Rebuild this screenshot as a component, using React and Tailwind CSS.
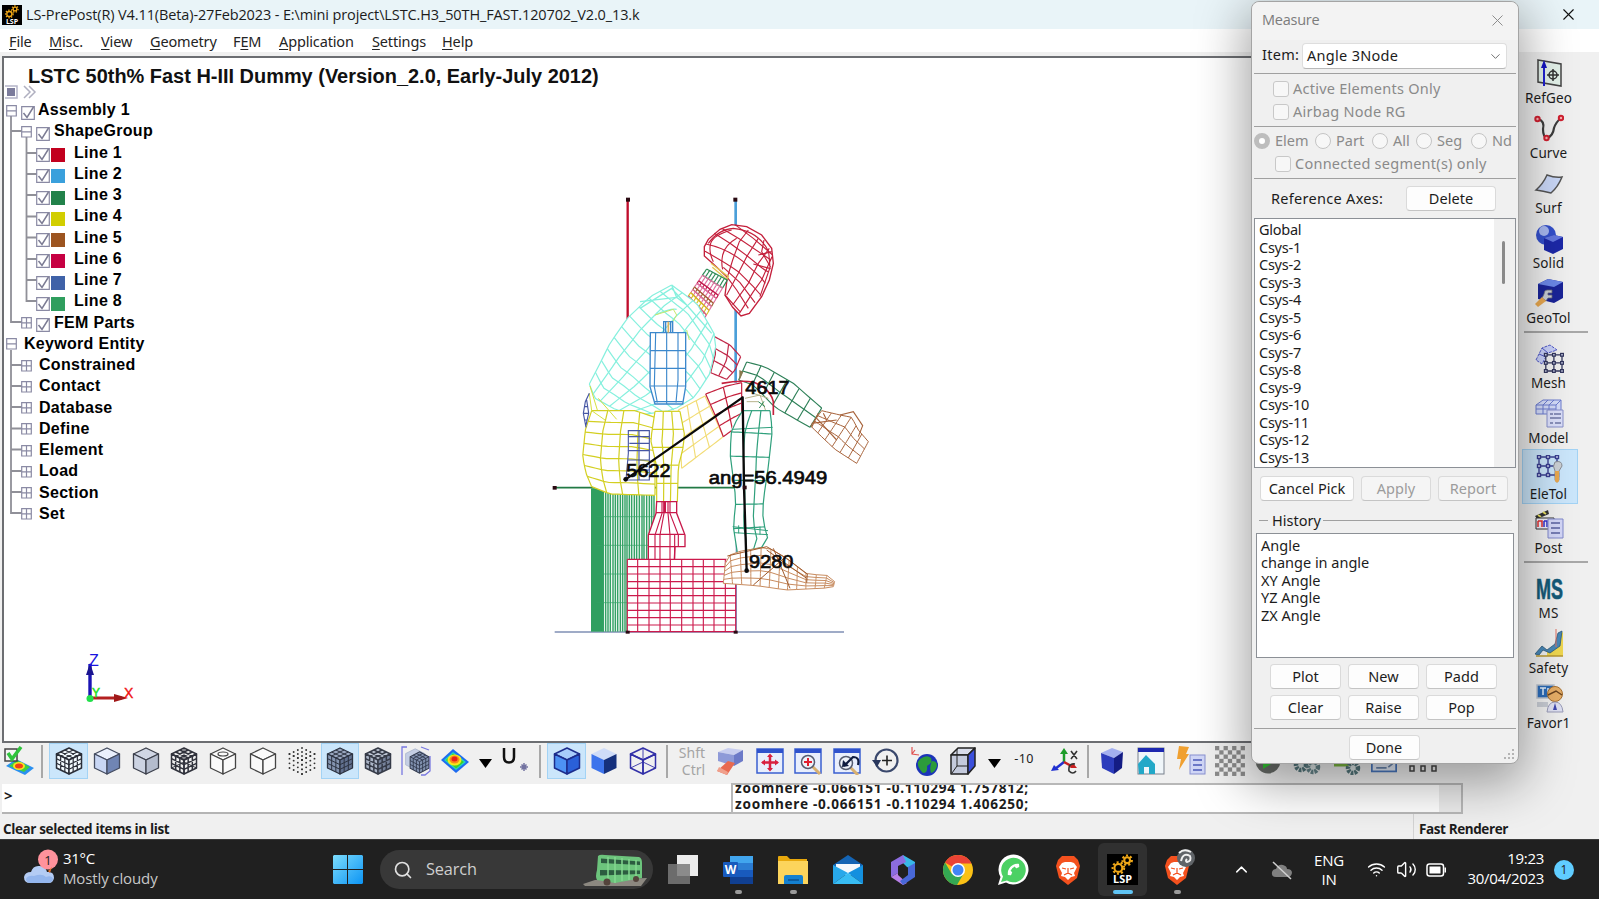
import React from "react";
import { ChevronDown, ChevronUp, Search, Volume2, Wifi, X } from "lucide-react";
import { FaPhoneAlt } from "react-icons/fa";

/* ---------- geometry helpers for the wireframe ---------- */
const at = (pts, t) => {
  const seg = [];
  let total = 0;
  for (let i = 1; i < pts.length; i++) {
    const d = Math.hypot(pts[i][0] - pts[i - 1][0], pts[i][1] - pts[i - 1][1]);
    seg.push(d);
    total += d;
  }
  let left = t * total;
  for (let i = 0; i < seg.length; i++) {
    if (left <= seg[i] || i === seg.length - 1) {
      const k = seg[i] ? Math.min(1, left / seg[i]) : 0;
      return [pts[i][0] + (pts[i + 1][0] - pts[i][0]) * k, pts[i][1] + (pts[i + 1][1] - pts[i][1]) * k];
    }
    left -= seg[i];
  }
  return pts[0];
};

const str = (pts) => pts.map((p) => `${p[0].toFixed(1)},${p[1].toFixed(1)}`).join(" ");

/* Coons patch bounded by four polylines, drawn as an nu x nv wire mesh. */
function Patch({ t, b, l, r, nu, nv, color, sw = 3, fill = "none" }) {
  const c00 = t[0], c10 = t[t.length - 1], c01 = b[0], c11 = b[b.length - 1];
  const p = (u, v) => {
    const T = at(t, u), B = at(b, u), L = at(l, v), R = at(r, v);
    return [0, 1].map(
      (k) =>
        (1 - v) * T[k] + v * B[k] + (1 - u) * L[k] + u * R[k] -
        ((1 - u) * (1 - v) * c00[k] + u * (1 - v) * c10[k] + (1 - u) * v * c01[k] + u * v * c11[k])
    );
  };
  const lines = [];
  const N = 12;
  for (let j = 0; j <= nv; j++) lines.push(Array.from({ length: N + 1 }, (_, i) => p(i / N, j / nv)));
  for (let i = 0; i <= nu; i++) lines.push(Array.from({ length: N + 1 }, (_, j) => p(i / nu, j / N)));
  return (
    <g fill="none" stroke={color} strokeWidth={sw}>
      {fill !== "none" && <polygon points={str([...t, ...r, ...[...b].reverse(), ...[...l].reverse()])} fill={fill} stroke="none" />}
      {lines.map((q, i) => <polyline key={i} points={str(q)} />)}
    </g>
  );
}

const NECK = [
  [0, 0.2, "#2e8b57"], [0.2, 0.38, "#e070a0"], [0.38, 0.46, "#c0184a"], [0.46, 0.58, "#e070a0"],
  [0.58, 0.66, "#a06030"], [0.66, 0.76, "#e070a0"], [0.76, 0.87, "#d4c01c"], [0.87, 1, "#d85a90"],
];
const neckL = (k) => [500 - 63 * k, 267 + 93 * k];
const neckR = (k) => [562 - 72 * k, 300 + 120 * k];

function Label({ x, y, w, children }) {
  return (
    <text x={x} y={y} textLength={w} lengthAdjust="spacingAndGlyphs" fontSize="56" fill="#0a0a0a" stroke="#0a0a0a" strokeWidth="2" fontFamily="Liberation Sans, sans-serif">
      {children}
    </text>
  );
}

function Dummy() {
  const stripes = [190, 197, 204, 211, 219, 226, 233, 241, 248, 255, 261];
  const upper = [268, 275, 283, 290, 298, 306, 312, 320, 328, 335, 342];
  return (
    <svg className="absolute left-[536px] top-[122px]" width="350" height="470" viewBox="0 0 1050 1410">
      {/* reference lines */}
      <path d="M44 1356H912" stroke="#7f8fb5" strokeWidth="4" />
      <path d="M589 1080V1355" stroke="#7d98c8" strokeWidth="4" />
      <path d="M263 58V420" stroke="#c00d2c" strokeWidth="7" />
      <path d="M587 58V608" stroke="#4b9fd9" strokeWidth="8" />
      <path d="M44 923H617" stroke="#227a45" strokeWidth="5" />
      {/* seat */}
      <rect x="153" y="925" width="38" height="430" fill="#2f9f60" />
      <g stroke="#35a266" strokeWidth="4.400">
        {stripes.map((x) => <path key={x} d={`M${x} 925V1355`} />)}
        {upper.map((x) => <path key={x} d={`M${x} 930V1138`} />)}
        <path d="M170 1010H345M170 1096H325M170 1182H262M170 1268H262" strokeWidth="2" />
      </g>
      {/* foot block */}
      <rect x="262" y="1138" width="325" height="217" fill="#fff" />
      <g stroke="#cc1a4c" strokeWidth="3.4" fill="none">
        {[262, 293, 327, 360, 391, 425, 459, 490, 522, 556, 587].map((x) => <path key={x} d={`M${x} 1138V1355`} />)}
        {[1138, 1160, 1182, 1205, 1225, 1247, 1269, 1291, 1313, 1335, 1355].map((y) => <path key={y} d={`M262 ${y}H587`} />)}
      </g>
      {/* head */}
      <path d="M493 228L493 200L505 178L540 148L575 134L620 140L665 165L695 205L700 250L688 300L665 350L628 400L603 408L578 382L555 345L562 292L520 252Z" fill="#fff" stroke="#c4203c" strokeWidth="4" />
      <g fill="none" stroke="#c4203c" strokeWidth="3.400">
        <path d="M523 160Q590 200 655 255Q670 268 684 275M498 192Q560 205 610 245L662 292L676 310M545 145L600 178L693 240M585 134L640 175L698 225M495 214Q560 250 595 275L640 320L662 345M550 262L600 308L645 368M562 292L590 330L625 385M555 345L600 395" />
        <path d="M575 150Q520 165 512 190Q505 215 520 245M590 175Q555 195 548 225Q543 250 548 268M625 150L598 185L578 240L562 292M655 175L620 230L595 280L560 345M688 205L655 250L625 310L578 375M696 230L665 300L640 335L598 400" />
        <path d="M505 190Q535 148 580 145Q655 152 686 215L690 262L660 350M672 180L665 215L692 262M655 225L695 215M640 252L692 266" />
      </g>
      <path d="M513 250L565 290L560 298L517 262" fill="none" stroke="#e0c850" strokeWidth="4" />
      {/* neck */}
      {NECK.map(([a, b, c]) => (
        <Patch key={a} color={c} nu={7} nv={1} sw={3.6} t={[neckL(a), neckR(a)]} b={[neckL(b), neckR(b)]} l={[neckL(a), neckL(b)]} r={[neckR(a), neckR(b)]} />
      ))}
      {/* far upper arm */}
      <Patch color="#c02848" sw={3.6} nu={2} nv={3} t={[[520, 468], [570, 495], [602, 530]]} r={[[602, 530], [585, 570], [560, 598]]} l={[[520, 468], [527, 520], [512, 578]]} b={[[512, 578], [560, 598]]} />
      {/* torso */}
      <Patch color="#86f0de" sw={3.6} fill="#fff" nu={10} nv={6}
        t={[[148, 612], [175, 560], [210, 490], [262, 415], [330, 350], [395, 315]]}
        r={[[395, 315], [470, 370], [522, 460], [527, 500]]}
        l={[[148, 612], [165, 655], [230, 690], [300, 705]]}
        b={[[300, 705], [400, 690], [465, 650], [510, 580], [527, 500]]} />
      <path d="M300 385L395 325L440 375L515 460M345 405Q390 385 410 388M300 365L410 352M395 315L410 352L440 375" fill="none" stroke="#86f0de" strokeWidth="4" />
      <path d="M345 405L400 388L410 405L398 425M440 450L448 480" fill="none" stroke="#c8e86a" strokeWidth="3" />
      {/* near arm */}
      <path d="M331 458H437V620L428 672H345L330 620Z" fill="#fff" stroke="#3c88cc" strokeWidth="4" />
      <path d="M347 458L343 620L352 668M380 458V672M414 458V600L408 668M331 512H437M330 565H437M331 618H435M345 665H428" fill="none" stroke="#3c88cc" strokeWidth="3.400" />
      <path d="M371 458V425H398V458M377 425V458M392 425V458" fill="none" stroke="#3c88cc" strokeWidth="4" />
      <path d="M385 425V458" stroke="#e0b060" strokeWidth="5" />
      {/* green forearm and hand */}
      <Patch color="#2e8058" sw={3.4} nu={6} nv={2}
        t={[[620, 546], [675, 560], [760, 610], [845, 684]]}
        r={[[845, 684], [810, 742]]}
        l={[[620, 546], [596, 600]]}
        b={[[596, 600], [640, 615], [705, 682], [810, 742]]} />
      <path d="M598 570L610 575L598 602Z" fill="#8a7a50" />
      <Patch color="#a8643c" nu={6} nv={3}
        t={[[845, 692], [900, 705], [935, 712], [955, 750], [985, 785]]}
        r={[[985, 785], [950, 850]]}
        l={[[845, 692], [812, 738]]}
        b={[[812, 738], [850, 775], [885, 808], [950, 850]]} />
      <path d="M900 705L940 695L968 737L955 770M815 730L890 720M830 715L890 780M835 700L815 742M850 700L860 720" fill="none" stroke="#a8643c" strokeWidth="3.400" />
      {/* far thigh and knee */}
      <Patch color="#f2dc74" fill="#fff" nu={3} nv={4} sw={3.4} t={[[415, 690], [495, 648]]} r={[[495, 648], [550, 770]]} l={[[415, 690], [425, 865]]} b={[[425, 865], [550, 770]]} />
      <Patch color="#c4203c" fill="#fff" nu={2} nv={4} sw={3.6} t={[[497, 642], [560, 618], [605, 608]]} r={[[605, 608], [605, 730]]} l={[[497, 642], [525, 705], [550, 770]]} b={[[550, 770], [605, 730]]} />
      <path d="M545 610Q600 600 640 606Q690 625 700 665V705" fill="none" stroke="#c4203c" strokeWidth="5" />
      <path d="M615 655L660 645L680 700M640 640L685 655M620 665H655" fill="none" stroke="#b8b48c" strokeWidth="3" />
      <path d="M655 665L675 680M672 664L658 684" stroke="#2e8b57" strokeWidth="3" />
      {/* shin */}
      <Patch color="#2fa07c" fill="#fff" nu={3} nv={6} sw={3.6}
        t={[[608, 692], [690, 692]]}
        r={[[690, 692], [697, 750], [685, 860], [670, 960], [668, 1030], [685, 1060], [680, 1085], [665, 1102]]}
        l={[[608, 692], [575, 745], [570, 820], [588, 960], [580, 1040], [592, 1118]]}
        b={[[592, 1118], [665, 1102]]} />
      <path d="M578 1040L684 1052M582 1058L684 1064M576 748L698 742M596 1036V1060M660 1040V1064" stroke="#2fa07c" strokeWidth="3" />
      {/* shoe */}
      <Patch color="#c88c60" fill="#fff" nu={12} nv={5}
        t={[[556, 1150], [562, 1128], [600, 1114], [680, 1100], [735, 1132], [800, 1182], [870, 1187], [884, 1205]]}
        r={[[884, 1205], [880, 1220]]}
        l={[[556, 1150], [550, 1210]]}
        b={[[550, 1210], [650, 1217], [740, 1230], [860, 1224], [880, 1220]]} />
      <path d="M562 1128L680 1100L740 1135L802 1182L800 1208M680 1110L800 1195M640 1215L735 1132M700 1105L750 1225" fill="none" stroke="#a05a2c" strokeWidth="3" />
      {/* pelvis */}
      <Patch color="#d3cf22" fill="#fff" nu={4} nv={7} sw={3.6}
        t={[[155, 692], [285, 692], [345, 712]]}
        r={[[345, 712], [345, 946]]}
        l={[[155, 692], [136, 750], [128, 830], [138, 880], [155, 920]]}
        b={[[155, 920], [210, 942], [345, 946]]} />
      <path d="M150 618L172 690M148 640L155 692L195 720M175 655L230 718" fill="none" stroke="#d6e040" strokeWidth="3" />
      <path d="M148 640L136 665L130 700L138 742M140 660L146 700L138 735M132 700H146M134 680H144M134 720H142" fill="none" stroke="#4656a4" strokeWidth="3.400" />
      <path d="M265 752H328V900H258L265 820ZM297 752V900M265 770H328M268 790H328M263 812H328M262 840H328M260 870H328" fill="none" stroke="#4656a4" strokeWidth="3.400" />
      {/* near thigh seen end-on */}
      <Patch color="#d3cf22" fill="#fff" nu={3} nv={5} sw={3.6}
        t={[[345, 694], [420, 694]]}
        r={[[420, 694], [433, 760], [430, 800], [415, 860], [412, 965]]}
        l={[[345, 694], [332, 780], [350, 860], [350, 965]]}
        b={[[350, 965], [412, 965]]} />
      {/* near lower leg */}
      <path d="M350 965H410V1000L435 1065V1100H405L403 1138H325V1065L348 1000Z" fill="#fff" stroke="#c8184a" strokeWidth="4" />
      <path d="M366 965V1000L345 1065V1138M390 965V1000L415 1065V1100M372 965V1000L360 1065V1138M384 965V1000L390 1065V1138M348 998H410M325 1063H435M325 1100H405M404 1063V1138" fill="none" stroke="#c8184a" strokeWidth="3.400" />
      <path d="M374 965V998" stroke="#c8184a" strokeWidth="8" />
      {/* angle measurement */}
      <path d="M257 898L608 652L612 920L620 1172" fill="none" stroke="#0a0a0a" strokeWidth="7" strokeLinejoin="round" />
      <g fill="#2a0a12">
        <rect x="258" y="53" width="12" height="12" /><rect x="580" y="53" width="12" height="12" />
        <rect x="38" y="918" width="12" height="11" /><rect x="257" y="1352" width="12" height="9" /><rect x="581" y="1352" width="12" height="9" />
        <rect x="608" y="917" width="12" height="11" />
      </g>
      <circle cx="257" cy="898" r="7" fill="#0a0a0a" /><circle cx="620" cy="1172" r="7" fill="#0a0a0a" />
      <Label x={616} y={643} w={133}>4617</Label>
      <Label x={259} y={892} w={133}>5622</Label>
      <Label x={506} y={912} w={356}>ang=56.4949</Label>
      <Label x={627} y={1164} w={133}>9280</Label>
    </svg>
  );
}

function Triad() {
  return (
    <svg className="absolute left-[68px] top-[588px]" width="80" height="60" viewBox="0 0 80 60" fontFamily="Liberation Sans, sans-serif" fontSize="16">
      <path d="M18 52V18" stroke="#1a14b4" strokeWidth="3.400" />
      <path d="M18 17L22 29H14Z" fill="#1a1490" />
      <path d="M18 52H50" stroke="#b42020" strokeWidth="3" />
      <path d="M56 52L42 48V56Z" fill="#a01818" />
      <circle cx="18" cy="52.500" r="3.500" fill="#22e04a" />
      <text x="20" y="51" fontSize="12" fill="#22e022" stroke="#22e022" strokeWidth=".5">Y</text>
      <text x="17" y="20" fill="#1a14e0">Z</text>
      <text x="52" y="52" fontSize="14" fill="#f01010" stroke="#f01010" strokeWidth=".4">X</text>
    </svg>
  );
}

/* ---------- tree ---------- */
const LINES = ["#c2001e", "#3aa0dc", "#22824a", "#d2ce00", "#9c5420", "#c60042", "#3f62a8", "#2f9e5e"];

function Box({ plus }) {
  return (
    <svg width="11" height="12" viewBox="0 0 11 12" className="mt-0.5 shrink-0">
      <path d={plus ? "M.7 .7H10.300V11H.7ZM.7 5.800H10.300M5.500 .7V11" : "M.7 .7H10.300V11H.7ZM.7 5.800H10.300"} fill="#fff" stroke="#8a8aa4" strokeWidth="1.200" />
    </svg>
  );
}

function Tick() {
  return (
    <svg width="14" height="14" viewBox="0 0 14 14" className="mt-1.5 shrink-0">
      <path d="M.7 .7H13.300V13.300H.7Z" fill="#fff" stroke="#8a8aa4" strokeWidth="1.200" />
      <path d="M2.500 7L6 11.500L12.500 1" fill="none" stroke="#7c7c94" strokeWidth="1.500" />
    </svg>
  );
}

function Row({ indent, children, text }) {
  return (
    <div className={`flex h-[21.25px] items-center ${indent}`}>
      {children}
      <span className="whitespace-pre pt-px pl-px text-base leading-none font-bold tracking-[0.300px] text-black">{text}</span>
    </div>
  );
}

function Tree() {
  return (
    <div className="relative font-['Liberation_Sans',Arial,sans-serif]">
      <svg className="absolute top-[-3px] left-[-2px]" width="40" height="430" viewBox="0 0 40 430" fill="none" stroke="#909098" strokeWidth="1.800">
        <path d="M9 20V226H22M9 35H22" />
        <path d="M24.500 40V205H35M24.500 57H35M24.500 78H35M24.500 99H35M24.500 120.500H35M24.500 141.500H35M24.500 163H35M24.500 184H35" />
        <path d="M9 254V417H20M9 269H20M9 290H20M9 311H20M9 332.500H20M9 353.500H20M9 375H20M9 396H20" />
      </svg>
      <div className="relative">
        <Row indent="pl-[2px]" text="Assembly 1"><Box /><span className="w-[4px]" /><Tick /><span className="w-[2px]" /></Row>
        <Row indent="pl-[17px]" text="ShapeGroup"><Box /><span className="w-[4px]" /><Tick /><span className="w-[3px]" /></Row>
        {LINES.map((c, i) => (
          <Row key={c} indent="pl-[32px]" text={`Line ${i + 1}`}>
            <Tick /><span className="mt-1.5 mr-[8px] ml-[1px] h-[14px] w-[14px]" style={{ background: c }} />
          </Row>
        ))}
        <Row indent="pl-[17px]" text="FEM Parts"><Box plus /><span className="w-[4px]" /><Tick /><span className="w-[3px]" /></Row>
        <Row indent="pl-[2px]" text="Keyword Entity"><Box /><span className="w-[6px]" /></Row>
        {["Constrained", "Contact", "Database", "Define", "Element", "Load", "Section", "Set"].map((t) => (
          <Row key={t} indent="pl-[17px]" text={t}><Box plus /><span className="w-[6px]" /></Row>
        ))}
      </div>
    </div>
  );
}

/* ---------- bottom toolbar ---------- */
const lerp = (a, b, t) => [a[0] + (b[0] - a[0]) * t, a[1] + (b[1] - a[1]) * t];
const A = [14, 1], B = [26.500, 7], C = [14, 13], D = [1.500, 7], E = [26.500, 21], F = [14, 27], G = [1.500, 21];
const seg = (p, q) => `M${p[0]} ${p[1]}L${q[0]} ${q[1]}`;
const GRID = [1 / 3, 2 / 3]
  .map((t) =>
    seg(lerp(D, A, t), lerp(C, B, t)) + seg(lerp(A, B, t), lerp(D, C, t)) + seg(lerp(D, G, t), lerp(C, F, t)) +
    seg(lerp(C, F, t), lerp(B, E, t)) + seg(lerp(D, C, t), lerp(G, F, t)) + seg(lerp(C, B, t), lerp(F, E, t))
  ).join("");

function Cube({ top = "none", left = "none", right = "none", stroke = "#2a2e38", sw = 1.300, grid, gridStroke, back, ring }) {
  return (
    <svg width="28" height="28" viewBox="0 0 28 28" strokeLinejoin="round">
      {back && <path d={seg(A, [14, 15]) + seg([14, 15], E) + seg([14, 15], G)} stroke={stroke} strokeWidth=".9" />}
      <g stroke={stroke} strokeWidth={sw}>
        <polygon points={str([A, B, C, D])} fill={top} />
        <polygon points={str([D, C, F, G])} fill={left} />
        <polygon points={str([C, B, E, F])} fill={right} />
      </g>
      {grid && <path d={GRID} stroke={gridStroke || stroke} strokeWidth={grid} fill="none" />}
      {ring && <ellipse cx="14" cy="7" rx="5" ry="2" fill="none" stroke={stroke} strokeWidth="1.200" />}
    </svg>
  );
}

function Dots() {
  const d = [];
  [0, 1 / 3, 2 / 3, 1].forEach((u) => [0, 1 / 3, 2 / 3, 1].forEach((v) => {
    d.push(lerp(lerp(D, C, u), lerp(G, F, u), v), lerp(lerp(C, B, u), lerp(F, E, u), v), lerp(lerp(D, A, u), lerp(C, B, u), v));
  }));
  return <svg width="28" height="28" viewBox="0 0 28 28" fill="#333">{d.map((p, i) => <circle key={i} cx={p[0]} cy={p[1]} r=".95" />)}</svg>;
}

function Fringe({ s = 30, h = 26 }) {
  return (
    <svg width={s} height={h} viewBox="0 0 30 26">
      <path d="M1 12L13 1L29 14L16 25Z" fill="#1e6cf0" />
      <path d="M4 12L13 4L26 14L16 22Z" fill="#22d8c0" />
      <path d="M6 12L13 5.500L24 14L16 20.500Z" fill="#3fd02a" />
      <ellipse cx="14.500" cy="12" rx="7" ry="5.500" fill="#f8e81c" />
      <ellipse cx="14.500" cy="11.500" rx="5" ry="4" fill="#f88a1c" />
      <ellipse cx="14.500" cy="11" rx="3" ry="2.500" fill="#e8201c" />
    </svg>
  );
}

const Sep = ({ className }) => <div className={`flex h-full justify-center pt-0.5 ${className}`}><span className="h-[33px] w-[2px] bg-[#a8a8a8]" /></div>;
const Slot = ({ className, on, children }) => (
  <div className={`flex h-[36px] shrink-0 items-center justify-center ${on ? "border border-[#a3d3f5] bg-[#cbe6fb]" : ""} ${className}`}>{children}</div>
);
const Caret = () => <svg width="13" height="9" viewBox="0 0 13 9" className="mt-1"><path d="M0 0H13L6.500 9Z" fill="#000" /></svg>;

const Win = ({ children }) => (
  <svg width="28" height="28" viewBox="0 0 28 28">
    <rect x="1" y="2" width="26" height="24" fill="#e8eefc" stroke="#3a5fd0" strokeWidth="1.500" />
    <rect x="1" y="2" width="26" height="4" fill="#2f52cc" />
    {children}
  </svg>
);
const Lens = ({ x = 14, y = 14 }) => (
  <g><path d={`M${x + 4} ${y + 4}L${x + 12} ${y + 12}`} stroke="#d8b070" strokeWidth="3" /><circle cx={x} cy={y} r="6.500" fill="#eef2fa" stroke="#555c70" strokeWidth="1.500" /></g>
);

function Gears() {
  return (
    <svg width="28" height="28" viewBox="0 0 28 28" fill="#dfe8e8" stroke="#54777c">
      <circle cx="8" cy="18" r="5" strokeWidth="4.500" strokeDasharray="2.600 1" /><circle cx="20" cy="20" r="5" strokeWidth="4.500" strokeDasharray="2.600 1" stroke="#67878c" />
    </svg>
  );
}

function Toolbar() {
  return (
    <div className="flex h-[40px] w-full shrink-0 items-start bg-[#f0f0f0]">
      <Slot className="w-[38px]">
        <svg width="30" height="30" viewBox="0 0 30 30">
          <path d="M2 20L12 13L30 22L21 29Z" fill="#2a90f0" /><path d="M5 20L13 14L26 21L20 26Z" fill="#3fd040" />
          <ellipse cx="15" cy="20" rx="6" ry="4" fill="#f8e020" /><ellipse cx="15" cy="20" rx="4" ry="2.500" fill="#f04018" />
          <rect x="1" y="3" width="12" height="12" fill="#f4f4f4" stroke="#444" strokeWidth="1.500" />
          <path d="M4 7L8 13L17 1" fill="none" stroke="#2fc43c" strokeWidth="3.500" />
        </svg>
      </Slot>
      <Sep className="mr-[3px] w-[8px]" />
      <Slot on className="w-[39px]"><Cube top="#f4fbff" left="#f4fbff" right="#f4fbff" grid={1.200} sw={1.500} /></Slot>
      <Slot className="w-[38px]"><Cube top="#eaf0fc" left="#c8d6f4" right="#7085b4" stroke="#444c60" /></Slot>
      <Slot className="w-[39px]"><Cube top="#d0d6e4" left="#ccd3e2" right="#b4bccd" stroke="#3c404c" /></Slot>
      <Slot className="w-[38px]"><Cube grid={1.500} stroke="#30323c" sw={1.500} back /></Slot>
      <Slot className="w-[40px]"><Cube top="#fafafa" left="#fafafa" right="#fafafa" stroke="#444" ring /></Slot>
      <Slot className="w-[39px]"><Cube top="#fafafa" left="#fafafa" right="#fafafa" stroke="#444" /></Slot>
      <Slot className="w-[39px]"><Dots /></Slot>
      <Slot on className="w-[38px]"><Cube top="#98a5bd" left="#8494b0" right="#61708e" grid={1} stroke="#2c3240" /></Slot>
      <Slot className="w-[38px]"><Cube top="#c0c8d6" left="#aab4c6" right="#76829a" grid={1.500} gridStroke="#363b48" stroke="#363b48" sw={1.500} /></Slot>
      <Slot className="w-[38px]">
        <svg width="30" height="30" viewBox="0 0 30 30">
          <path d="M1 29V1H6M29 10V25L24 29H20M20 1L28 4" fill="none" stroke="#7878e0" strokeWidth="1.300" />
          <g transform="translate(3 2) scale(.8)"><path d="M14 1L26 7V21L14 27L2 21V7Z" fill="#c4cee4" stroke="#a8b4cc" /></g>
          <g transform="translate(8 5) scale(.75 .82)"><polygon points={str([A, B, E, F, G, D])} fill="#8090ae" stroke="#30384c" strokeWidth="1.300" /><path d={GRID + seg(D, C) + seg(C, B) + seg(C, F)} stroke="#30384c" strokeWidth="1.100" /></g>
        </svg>
      </Slot>
      <Slot className="w-[40px]"><Fringe /></Slot>
      <Slot className="w-[20px]"><Caret /></Slot>
      <Slot className="w-[40px]">
        <svg width="30" height="30" viewBox="0 0 30 30"><path d="M4 2V11Q4 16.500 9 16.500Q14 16.500 14 11V2" fill="none" stroke="#111" strokeWidth="2.500" /><path d="M24 17V25M20 21H28M21.500 18.500L26.500 23.500M26.500 18.500L21.500 23.500" stroke="#7272a0" strokeWidth="1.500" /></svg>
      </Slot>
      <Sep className="mr-[2px] w-[10px]" />
      <Slot on className="w-[39px]"><Cube top="#a8ccfa" left="#4d92f4" right="#2a60d8" stroke="#1c2c8c" sw={1.500} /></Slot>
      <Slot className="w-[36px]"><Cube top="#cfdcf8" left="#3d74ec" right="#15307c" stroke="none" /></Slot>
      <Slot className="w-[42px]"><Cube stroke="#3230a8" sw={1.500} back /></Slot>
      <Sep className="w-[5px]" />
      <Slot className="w-[46px]">
        <div className="flex flex-col gap-[3px] font-['Noto_Sans',sans-serif] text-[14px] leading-[14px] text-[#a4a4a4]"><span>Shft</span><span className="pl-[3px]">Ctrl</span></div>
      </Slot>
      <Slot className="w-[29px]">
        <svg width="28" height="30" viewBox="0 0 28 30"><path d="M2 6L12 2L27 4L18 9Z" fill="#c8cef0" /><path d="M2 6L18 9V20L2 15Z" fill="#8e9ad8" /><path d="M18 9L27 4V15L18 20Z" fill="#6c7ac8" /><path d="M12 15L19 17L11 29L1 25Z" fill="#e86a50" /><path d="M1 25L11 29L12 26L3 21Z" fill="#f0a08c" /></svg>
      </Slot>
      <Slot className="ml-[6px] w-[39px]"><Win><path d="M14 8V23M6.500 15.500H21.500" stroke="#d82040" strokeWidth="2.500" /><path d="M14 6.500L17 10H11ZM14 24.500L17 21H11ZM5 15.500L9 12.500V18.500ZM23 15.500L19 12.500V18.500Z" fill="#d82040" /></Win></Slot>
      <Slot className="w-[38px]"><Win><Lens y={15} /><path d="M14 11V19M10 15H18" stroke="#e02030" strokeWidth="2" /></Win></Slot>
      <Slot className="w-[40px]"><Win><Lens x={13} y={16} /><path d="M11 19L20 10Q27 10 25 18" fill="none" stroke="#101c40" strokeWidth="2.200" /><path d="M9 20L10 13L16 19Z" fill="#101c40" /></Win></Slot>
      <Slot className="w-[38px]">
        <svg width="28" height="28" viewBox="0 0 28 28" fill="none"><circle cx="14.500" cy="13.500" r="11" stroke="#3a486c" strokeWidth="2.200" /><path d="M0 13L9 13L5 20Z" fill="#28365c" /><path d="M15 8.500V18.500M10 13.500H20" stroke="#222" strokeWidth="1.600" /></svg>
      </Slot>
      <Slot className="w-[38px]">
        <svg width="30" height="30" viewBox="0 0 30 30"><path d="M3 1V8L10 9M3 8L6 4" fill="none" stroke="#e05050" strokeWidth="1.200" /><circle cx="18" cy="19" r="11" fill="#1c34b8" /><path d="M11 13Q18 8 22 12Q24 17 18 20Q19 27 14 27Q8 21 9 16ZM23 15Q28 15 28 20Q26 26 22 27Q20 21 23 15Z" fill="#2c9c3a" /></svg>
      </Slot>
      <Slot className="w-[40px]">
        <svg width="28" height="28" viewBox="0 0 28 28" stroke="#222" strokeWidth="1.500" strokeLinejoin="round"><path d="M2 8L9 1H26L19 8Z" fill="#d8dcea" /><path d="M2 8H19V27H2Z" fill="#c4cadc" /><path d="M19 8L26 1V19L19 27Z" fill="#3c50dc" /><path d="M8 2V19M8 19L3 26M8 19H19" fill="none" strokeWidth="1" /></svg>
      </Slot>
      <Slot className="w-[22px]"><Caret /></Slot>
      <Slot className="w-[38px]"><span className="pb-1 font-['Noto_Sans',sans-serif] text-[12.500px] tracking-[0.400px] text-[#222]">-10</span></Slot>
      <Slot className="w-[43px]">
        <svg width="28" height="28" viewBox="0 0 28 28" fill="none"><path d="M13 15V4" stroke="#1c9c28" strokeWidth="2.500" /><path d="M13 1L17 7H9Z" fill="#1c9c28" /><path d="M13 15L4 22" stroke="#2030d0" strokeWidth="2.500" /><path d="M0 24L3 18L8 23Z" fill="#2030d0" /><path d="M13 15L22 20" stroke="#c82020" strokeWidth="2.500" /><path d="M26 21L19 21L22 16Z" fill="#c82020" /><path d="M20 4L26 12M26 4L20 12M24 17Q17 16 18 24Q22 28 25 24" stroke="#333" strokeWidth="1.600" /></svg>
      </Slot>
      <Sep className="w-[3px]" />
      <Slot className="w-[46px]">
        <svg width="26" height="28" viewBox="0 0 26 28"><path d="M2 6L13 1L24 5L15 11Z" fill="#a4b0f0" /><path d="M2 6L15 11V27L3 21Z" fill="#2c3cbc" /><path d="M15 11L24 5L23 21L15 27Z" fill="#141c84" /></svg>
      </Slot>
      <Slot className="w-[32px]">
        <svg width="28" height="28" viewBox="0 0 28 28"><rect x="1" y="1" width="26" height="26" fill="#f0f6fa" stroke="#78808c" /><rect x="1" y="1" width="26" height="4" fill="#1c28b0" /><path d="M1 17L9 8L18 17V27H12V20H7V27H2Z" fill="#22a8c8" /></svg>
      </Slot>
      <Slot className="w-[48px]">
        <svg width="30" height="30" viewBox="0 0 30 30"><path d="M3 0L13 1L10 8L13 8L3 24L5 13L1 13Z" fill="#f0a030" /><rect x="14" y="9" width="15" height="19" fill="#d0d6f6" stroke="#8890d0" /><path d="M17 14H26M17 19H26M17 24H26" stroke="#6c78c8" strokeWidth="1.800" /></svg>
      </Slot>
      <Slot className="w-[30px]">
        <svg width="30" height="30" viewBox="0 0 30 30"><g fill="#8c8c8c">{Array.from({ length: 49 }, (_, i) => (i % 2 ? null : <rect key={i} x={(i % 7) * 4.280} y={Math.floor(i / 7) * 4.280} width="4.280" height="4.280" />))}</g></svg>
      </Slot>
      <Slot className="w-[46px]"><svg width="26" height="26" viewBox="0 0 26 26"><circle cx="13" cy="13" r="12.500" fill="#686c68" /><path d="M8 5L21 13L8 21Z" fill="#32c432" /></svg></Slot>
      <Slot className="w-[32px]"><Gears /></Slot>
      <Slot className="w-[48px]"><svg width="28" height="28" viewBox="0 0 28 28" fill="none"><path d="M1 18H15L20 19" stroke="#7cb840" strokeWidth="3" /><circle cx="20" cy="21" r="5" fill="#dfe8e8" stroke="#54777c" strokeWidth="4.500" strokeDasharray="2.600 1" /></svg></Slot>
      <Slot className="w-[26px]"><svg width="30" height="28" viewBox="0 0 30 28"><rect x="1" y="1" width="28" height="25" fill="#e6eefa" stroke="#4a78c0" strokeWidth="2" /><path d="M6 22H18M20 21L25 17" stroke="#6c88b0" strokeWidth="2" /></svg></Slot>
      <Slot className="w-[52px]"><svg width="28" height="28" viewBox="0 0 28 28" fill="none" stroke="#444" strokeWidth="1.500"><path d="M1 19H5V24H1ZM12 19H16V24H12ZM23 19H27V24H23Z" /></svg></Slot>
    </div>
  );
}

/* ---------- right toolbar ---------- */
const GridNodes = ({ x, y, s, c = "#3a3f90" }) => (
  <g transform={`translate(${x} ${y}) scale(${s})`} fill="#dfe4fa" stroke={c} strokeWidth="1.400">
    <path d="M2 2H20V20H2ZM11 2V20M2 11H20" fill="none" />
    {[2, 11, 20].map((a) => [2, 11, 20].map((b) => <rect key={`${a}${b}`} x={a - 1.500} y={b - 1.500} width="3" height="3" />))}
  </g>
);

const SIDE = [
  ["RefGeo", <g><path d="M4 1L27 5V27L4 23Z" fill="#e4f2ea" stroke="#444" strokeWidth="1.500" /><path d="M10 27V8" stroke="#2020d0" strokeWidth="2" /><path d="M10 1L13 9H7Z" fill="#1414c0" /><circle cx="19" cy="16" r="4" fill="none" stroke="#333" strokeWidth="1.500" /><path d="M19 10V22M13 16H25" stroke="#333" strokeWidth="1.500" /></g>],
  ["Curve", <g><path d="M4 5Q11 7 9 15Q9 23 13 24Q19 22 20 14Q22 8 27 4" fill="none" stroke="#3c3c3c" strokeWidth="2.200" /><g fill="#f8b0b0" stroke="#d02030" strokeWidth="2"><circle cx="3.500" cy="5" r="2.200" /><circle cx="27" cy="4" r="2.200" /><circle cx="12.500" cy="24" r="2.200" /></g></g>],
  ["Surf", <path d="M2 21Q9 15 13 6Q21 9 28 8Q24 18 17 24Q9 22 2 21Z" fill="#cad8f8" stroke="#555" strokeWidth="1.500" />],
  ["Solid", <g><circle cx="12" cy="11" r="10" fill="#3450cc" /><circle cx="10" cy="7" r="5" fill="#a8b8f0" /><path d="M10 14L20 11L29 13V25L19 30L10 26Z" fill="#1c28a8" /><path d="M10 14L20 11L29 13L19 18Z" fill="#6478e0" /></g>],
  ["GeoTol", <g><path d="M4 5L14 0L29 3V19L20 24L4 20Z" fill="#1a2498" /><path d="M4 5L14 0L29 3L20 8Z" fill="#6c88e8" /><path d="M18 11H13Q10 11 10 15L8 19L12 22L14 19H18V16H14V14H18Z" fill="#c8ccd4" stroke="#667" strokeWidth=".8" /><path d="M8 18L1 25L4 28L12 22Z" fill="#e8a850" /></g>],
  null,
  ["Mesh", <g><path d="M2 16L8 4L16 1L23 6L14 9L8 20Z" fill="#c8d0f8" stroke="#5058c8" strokeDasharray="3 1" /><path d="M8 4L14 9M5 10L12 13" stroke="#5058c8" /><GridNodes x={10} y={9} s={0.900} c="#30345c" /></g>],
  ["Model", <g><path d="M2 6L9 1H27V11L22 15H2Z" fill="#d4dcfa" stroke="#6c7cd0" /><path d="M2 10H22M9 6V15M15 6V15M2 6H22L27 1M22 6V15M9 6L14 1M15 6L20 1" fill="none" stroke="#6c7cd0" /><path d="M13 11H29V28H13Z" fill="#dce0fa" stroke="#8890cc" /><path d="M16 15H19M20 15H27M16 19H27M16 24H19M21 24H27" stroke="#7078a8" strokeWidth="1.300" /></g>],
  ["EleTol", <g><GridNodes x={3} y={0} s={1} /><path d="M21 7Q28 5 28 11L25 16V25Q23 29 21 25V16Q18 11 21 7Z" fill="#ccd0d4" stroke="#8a8e96" /><path d="M21 16H25V26Q23 29 21 26Z" fill="#e8a850" /></g>],
  ["Post", <g><path d="M1 7L14 1L15 5L3 10Z" fill="#333" /><path d="M4 6L7 8M9 3L12 5" stroke="#e8e060" strokeWidth="2" /><path d="M2 9H20V20H2Z" fill="#f0f0fa" stroke="#333" /><path d="M4 12H8V18M4 12V18" stroke="#e03030" strokeWidth="1.500" fill="none" /><path d="M10 12H13V18M10 12V18" stroke="#3030d0" strokeWidth="1.500" fill="none" /><path d="M14 10H29V29H14Z" fill="#d4d8f8" stroke="#8088cc" /><path d="M17 14H26M17 19H26M17 24H26" stroke="#5860a0" strokeWidth="1.300" /></g>],
  null,
  ["MS", <text x="2" y="25" textLength="27" lengthAdjust="spacingAndGlyphs" fontSize="29" fontWeight="700" fontFamily="Liberation Sans, sans-serif" fill="#145a78" stroke="#145a78" strokeWidth=".6">MS</text>],
  ["Safety", <g><path d="M13 22L24 17L26 5L29 3V27H13Z" fill="#f0d850" /><path d="M1 25L8 17L13 21L21 15L24 4L28 2L26 17L16 24L9 21L5 26Z" fill="#4888b8" stroke="#2c5878" strokeWidth=".8" /><path d="M22 0V18" stroke="#e07060" /><path d="M2 27H29" stroke="#b89830" strokeWidth="1.500" /></g>],
  ["Favor1", <g><path d="M3 1H20V14H3Z" fill="#2c6cb8" stroke="#bcc4d0" strokeWidth="1.500" /><path d="M6 4H12M9 4V11M14 4V11M14 7H17V11" stroke="#e4f0fc" strokeWidth="1.500" fill="none" /><path d="M3 18H14V23H3Z" fill="#c8ccd4" /><circle cx="21" cy="10" r="7.500" fill="#e8b068" stroke="#a87030" /><path d="M14 11L22 7L28 11" fill="none" stroke="#6a4420" strokeWidth="1.500" /><path d="M13 28Q14 18 21 18Q28 18 29 28Z" fill="#e0e2f4" stroke="#9a9cb8" /><path d="M21 19L23 26H19Z" fill="#4048b0" /></g>],
];

function SideBar() {
  return (
    <div className="flex w-[80px] shrink-0 flex-col bg-[#f0f0f0] pl-[3px]">
      {SIDE.map((it, i) =>
        it === null ? (
          <div key={i} className="flex h-[10px] w-[66px] items-start pt-[2px]"><span className="ml-0.5 h-[2px] w-full bg-[#a8a8a8]" /></div>
        ) : (
          <div key={i} className={`flex h-[55px] w-[56px] flex-col items-center pt-[5px] ${it[0] === "EleTol" ? "border border-[#a3d3f5] bg-[#cbe6fb]" : ""}`}>
            <svg width="30" height="31" viewBox="0 0 30 31" className="-ml-0.5 shrink-0">{it[1]}</svg>
            <span className="-mt-px mr-[3px] font-['Noto_Sans',sans-serif] text-[13.500px] leading-[18px] tracking-[0.100px] text-[#1c1c1c]">{it[0]}</span>
          </div>
        )
      )}
    </div>
  );
}

/* ---------- Measure dialog ---------- */
const Btn = ({ className, off, children }) => (
  <div className={`flex h-[25px] items-center justify-center rounded border border-[#dadada] border-b-[#c4c4c4] pb-[1px] tracking-[0.050px] ${off ? "bg-[#f5f5f5] text-[#9c9c9c]" : "bg-[#fdfdfd] text-[#1c1c1c]"} ${className}`}>{children}</div>
);
const Check = ({ label, className }) => (
  <div className={`flex items-center gap-[4px] ${className}`}>
    <span className="h-4 w-4 shrink-0 rounded-[3px] border border-[#c8c8c8] bg-[#f7f7f7]" />
    <span className="pb-px tracking-[0.250px]">{label}</span>
  </div>
);
const Radio = ({ on, label, className }) => (
  <div className={`flex items-center gap-[5px] ${className}`}>
    <span className={`h-4 w-4 shrink-0 rounded-full ${on ? "border-[5px] border-[#bdbdbd] bg-white" : "border border-[#c4c4c4] bg-[#f7f7f7]"}`} />
    <span className="pb-px tracking-[0]">{label}</span>
  </div>
);
const Rule = ({ className }) => <div className={`mx-[2px] h-px shrink-0 bg-[#a0a0a0] ${className}`} />;

function Measure() {
  return (
    <div className="absolute top-px left-[1251px] flex h-[763px] w-[268px] flex-col rounded-lg border border-[#a4a4a4] bg-[#f0f0f0] font-['Noto_Sans',sans-serif] text-[14.500px] leading-none tracking-[0.300px] text-[#1c1c1c] shadow-[0_14px_50px_6px_rgba(0,0,0,0.36)]">
      <div className="flex h-[38px] shrink-0 items-center justify-between rounded-t-lg bg-[#f3f3f3] pr-[11px] pb-[2px] pl-[10px]">
        <span className="font-['Open_Sans',sans-serif] text-[14.500px] tracking-[-0.250px] text-[#7c7c7c]">Measure</span>
        <X size={19} strokeWidth={1.200} color="#888" />
      </div>
      <div className="flex h-[33px] shrink-0 items-start pt-[3px] pl-[10px]">
        <span className="w-[40px] pt-[4px]">Item:</span>
        <div className="flex h-[26px] w-[205px] items-center justify-between rounded-sm border border-[#dedede] border-b-[#b8b8b8] bg-white pr-[3px] pl-[4px]"><span className="pb-px">Angle 3Node</span><ChevronDown size={15} strokeWidth={1.500} color="#666" /></div>
      </div>
      <Rule />
      <div className="flex h-[52px] shrink-0 flex-col gap-[7px] pt-[7px] pl-[21px] text-[#8a8a8a]">
        <Check label="Active Elements Only" />
        <Check label="Airbag Node RG" />
      </div>
      <Rule />
      <div className="flex h-[51px] shrink-0 flex-col gap-[7px] pt-[6px] text-[#8a8a8a]">
        <div className="flex pl-[2px]">
          <Radio on label="Elem" className="w-[61px]" /><Radio label="Part" className="w-[57px]" /><Radio label="All" className="w-[44px]" /><Radio label="Seg" className="w-[55px]" /><Radio label="Nd" />
        </div>
        <Check label="Connected segment(s) only" className="pl-[23px]" />
      </div>
      <Rule />
      <div className="flex h-[39px] shrink-0 items-start pt-[7px] pl-[19px]">
        <span className="w-[135px] pt-[5px]">Reference Axes:</span>
        <Btn className="w-[90px]">Delete</Btn>
      </div>
      <div className="mx-[2px] flex h-[250px] shrink-0 justify-between border border-[#8c9096] bg-white">
        <div className="flex flex-col pt-[2px] pl-[4px] leading-[17.500px] tracking-[-0.250px]">
          <span>Global</span>
          {Array.from({ length: 13 }, (_, i) => <span key={i}>Csys-{i + 1}</span>)}
        </div>
        <div className="w-[21px] bg-[#f0f0f0] pt-[22px] pl-[8px]"><div className="h-[43px] w-[3px] rounded bg-[#8a8a8a]" /></div>
      </div>
      <div className="flex h-[42px] shrink-0 gap-[7px] pt-[8px] pl-[8px]">
        <Btn className="w-[94px]">Cancel Pick</Btn><Btn off className="w-[70px]">Apply</Btn><Btn off className="w-[70px]">Report</Btn>
      </div>
      <div className="flex h-[23px] shrink-0 items-center pr-[6px] pb-[3px] pl-[7px] tracking-[0]">
        <span className="h-px w-[9px] bg-[#a0a0a0]" /><span className="pr-[2px] pl-[4px]">History</span><span className="h-px flex-1 bg-[#a0a0a0]" />
      </div>
      <div className="mx-[4px] flex h-[125px] shrink-0 flex-col border border-[#8c9096] bg-white pt-[3px] pl-[4px] leading-[17.450px] tracking-[0]">
        {["Angle", "change in angle", "XY Angle", "YZ Angle", "ZX Angle"].map((t) => <span key={t}>{t}</span>)}
      </div>
      <div className="grid h-[70px] shrink-0 grid-cols-[71px_71px_71px] content-start gap-x-[7px] gap-y-[6px] pt-[6px] pl-[18px]">
        {["Plot", "New", "Padd", "Clear", "Raise", "Pop"].map((t) => <Btn key={t}>{t}</Btn>)}
      </div>
      <Rule />
      <div className="flex flex-1 justify-center pt-[6px] pr-[2px]"><Btn className="w-[71px]">Done</Btn></div>
      <svg className="absolute right-[3px] bottom-[3px]" width="11" height="11" viewBox="0 0 11 11" fill="#b4b4b4"><path d="M8 0H10V2H8ZM8 4H10V6H8ZM8 8H10V10H8ZM4 4H6V6H4ZM4 8H6V10H4ZM0 8H2V10H0Z" /></svg>
    </div>
  );
}

/* ---------- taskbar ---------- */
const Gear = ({ x, y, r }) => (
  <g fill="none" stroke="#f0a818"><circle cx={x} cy={y} r={r} strokeWidth="2" /><circle cx={x} cy={y} r={r + 1.800} strokeWidth="2" strokeDasharray="2 2" /></g>
);
const Lsp = ({ s }) => (
  <svg width={s} height={s} viewBox="0 0 30 30"><rect width="30" height="30" fill="#000" /><Gear x={11} y={13.500} r={3.800} /><Gear x={19.500} y={6} r={2.800} /><text x="15" y="28.500" textAnchor="middle" fontSize="10.500" fontWeight="700" fill="#fff" fontFamily="Open Sans, sans-serif">LSP</text></svg>
);
const Brave = () => (
  <g><path d="M9 1H21L25 5L27 11L24 23L15 30L6 23L3 11L5 5Z" fill="#f4511e" /><path d="M9 8L12 7H18L21 8L24 12L21 18L22 21L18 22L15 25L12 22L8 21L9 18L6 12Z" fill="#fff" /><path d="M9 13L13 14M21 13L17 14M15 13V19M11 20L15 18L19 20" stroke="#f4511e" strokeWidth="1.200" fill="none" /></g>
);

const APPS = [
  ["task", <g><path d="M9 0H30V21H9Z" fill="#ececec" /><path d="M0 9H22V29H0Z" fill="#7a7a7a" opacity=".85" /></g>],
  ["word", <g><path d="M7 1H30V8H7Z" fill="#41a5ee" /><path d="M7 8H30V15H7Z" fill="#2b7cd3" /><path d="M7 15H30V22H7Z" fill="#185abd" /><path d="M7 22H30V29H7Z" fill="#103f91" /><rect x="0" y="7" width="15" height="15" rx="1" fill="#185abd" /><text x="7.500" y="19" textAnchor="middle" fontSize="12" fontWeight="700" fill="#fff" fontFamily="Open Sans, sans-serif">W</text></g>, "dot"],
  ["files", <g><path d="M0 2Q0 1 1 1H9L12 4H29V12H0Z" fill="#e8a80c" /><path d="M0 6H30V29H0Z" fill="#fcd45c" /><path d="M6 29V22Q6 20 8 20H23Q25 20 25 22V29Z" fill="#1480d0" /><path d="M10 24H21V26H10Z" fill="#0c5ca0" /></g>, "dot"],
  ["mail", <g><path d="M0 10L15 0L30 10V20H0Z" fill="#1464b4" /><path d="M3 9H27V20H3Z" fill="#f4f8fc" /><path d="M0 10L15 18L0 29Z" fill="#28a8ea" /><path d="M30 10L15 18L30 29Z" fill="#1490df" /><path d="M0 29L15 18L30 29Z" fill="#38bdf4" /></g>],
  ["m365", <g><path d="M15 0L27 7V15L19 12L15 8Z" fill="#38b8e8" /><path d="M15 0L3 7V22L10 18V11L18 7Z" fill="#8c6ce0" /><path d="M3 22L15 30L19 28L10 20V18Z" fill="#b880e8" /><path d="M27 8V22L15 30L12 26L20 20V12Z" fill="#4868d8" /></g>],
  ["chrome", <g><circle cx="15" cy="15" r="15" fill="#fbc116" /><path d="M15 15L2 7.500A15 15 0 0 1 28.500 8.500H15Z" fill="#ea4335" /><path d="M2 7.500A15 15 0 0 0 14 30L21 18L15 15L8.500 18.500Z" fill="#34a853" /><circle cx="15" cy="15" r="7" fill="#fff" /><circle cx="15" cy="15" r="5.500" fill="#4285f4" /></g>],
  ["wa", <g><path d="M0 30L2.500 22A15 15 0 1 1 8 27.500Z" fill="#fff" /><path d="M3 27L5 21.500A12.300 12.300 0 1 1 9 25.500Z" fill="#4cd164" /><g transform="translate(30 0) scale(-1 1)"><g transform="rotate(0)"><g transform="translate(30 0) scale(-1 1) rotate(90 15.500 14.500)"><FaPhoneAlt x={9.500} y={8.500} size={12} color="#fff" /></g></g></g></g>],
  ["brave", <Brave />],
  ["lsp", null, "on"],
  ["brave2", <g><Brave /><circle cx="24" cy="3" r="9" fill="#606468" /><path d="M17 -2Q22 -7 29 -3M19 6Q21 -3 28 1Q30 6 25 7Q23 6 25 4" stroke="#f0f0f0" strokeWidth="2" fill="none" /></g>, "dot"],
];

function Taskbar() {
  return (
    <div className="flex h-[60px] w-full shrink-0 items-center border-t border-[#3a3a3a] bg-[#202020] font-['Open_Sans',sans-serif] text-white">
      <div className="flex w-[333px] items-center pl-[22px]">
        <svg width="36" height="36" viewBox="0 0 36 36" className="-mt-1.5 shrink-0">
          <path d="M8 34Q2 34 2 28Q3 23 9 23Q11 16 18 17Q24 18 25 23Q32 22 32 29Q31 34 27 34Z" fill="#b4ccf4" /><path d="M4 30Q6 26 12 27Q20 24 24 28Q30 26 31 30Q30 34 26 34H8Q4 33 4 30Z" fill="#7ea6e8" opacity=".6" />
          <circle cx="26" cy="10.500" r="10" fill="#ff929c" /><path d="M26 22L30 18L28 24Z" fill="#e07028" /><text x="26" y="15.500" textAnchor="middle" fontSize="13" fill="#222">1</text>
        </svg>
        <div className="-mt-[3px] flex flex-col pl-[5px] text-[15px] leading-[20px] tracking-[-0.300px]"><span>31°C</span><span className="tracking-[-0.120px] text-[#c8c8c8]">Mostly cloudy</span></div>
      </div>
      <svg width="30" height="30" viewBox="0 0 30 30"><defs><linearGradient id="win" x1="0" y1="0" x2="1" y2="1"><stop offset="0" stopColor="#7cdcfc" /><stop offset="1" stopColor="#0c94f4" /></linearGradient></defs><path d="M1 0H14V14H0V1ZM15 0H29L30 1V14H15ZM0 15H14V29H1L0 28ZM15 15H30V28L29 29H15Z" fill="url(#win)" /></svg>
      <div className="ml-[17px] flex h-[39px] w-[273px] items-center rounded-full bg-[#383838] pl-[13px]">
        <Search size={20} strokeWidth={2} color="#e0e0e0" />
        <span className="ml-[13px] text-[16.300px] tracking-[-0.100px] text-[#cfcfcf]">Search</span>
        <svg width="66" height="34" viewBox="0 0 66 34" className="ml-auto mr-[4px]">
          <path d="M0 31L12 27L64 25L58 33H2Z" fill="#8c8880" />
          <path d="M15 3Q17 1 22 2L56 4Q59 5 59 10V25L32 30L14 27Q12 24 14 17Z" fill="#6cc47c" />
          <path d="M18 5.500L57 8.500V12L18 10ZM17 17L57 17.500V21L17 22.500Z" fill="#2c5c40" />
          <path d="M25 4V28M32 4V30M39 5V28M46 6V27M53 7V25" stroke="#84d890" strokeWidth="1.500" />
          <circle cx="24" cy="29" r="3.500" fill="#54443c" /><circle cx="53" cy="26" r="3" fill="#54443c" />
        </svg>
      </div>
      <div className="flex h-full pl-[3px]">
        {APPS.map(([k, icon, st]) => (
          <div key={k} className="relative flex h-full w-[54.900px] items-center justify-center">
            {st === "on" ? (
              <div className="flex h-[53px] w-[49px] items-center justify-center rounded-md bg-[#303030]"><Lsp s={31} /></div>
            ) : (
              <svg width="30" height="30" viewBox="0 0 30 30" className="overflow-visible">{icon}</svg>
            )}
            {st && <span className={`absolute bottom-[5px] h-1 rounded-full ${st === "on" ? "w-5 bg-[#60c4f4]" : "w-[7px] bg-[#9a9a9a]"}`} />}
          </div>
        ))}
      </div>
      <div className="ml-auto flex h-full items-center pr-[25px]">
        <ChevronUp size={19} strokeWidth={1.800} />
        <svg width="24" height="20" viewBox="0 0 24 20" className="ml-[19px]"><path d="M6 17Q1 17 2 12Q3 9 6 9Q8 4 13 5Q17 6 17 9Q22 9 22 13Q21 17 18 17Z" fill="#808080" /><path d="M3 2L21 19" stroke="#d0d0d0" strokeWidth="1.500" /></svg>
        <div className="ml-[21px] flex w-[28px] flex-col items-center text-[15px] leading-[19px] tracking-[-0.200px]"><span>ENG</span><span>IN</span></div>
        <Wifi size={19} strokeWidth={1.800} className="ml-[24px]" />
        <Volume2 size={21} strokeWidth={1.600} className="ml-[10px]" />
        <svg width="21" height="14" viewBox="0 0 21 14" className="ml-[9px]"><rect x="1" y="1" width="16.500" height="12" rx="2.500" fill="none" stroke="#fff" strokeWidth="1.500" /><rect x="3.500" y="3.500" width="11" height="7" fill="#fff" /><path d="M18.500 4.500H20V9.500H18.500Z" fill="#fff" /></svg>
        <div className="-mt-[3px] ml-[11px] flex w-[86px] flex-col items-end text-[15px] leading-[20px] tracking-[-0.300px] whitespace-nowrap"><span>19:23</span><span>30/04/2023</span></div>
        <span className="ml-[10px] flex h-5 w-5 items-center justify-center rounded-full bg-[#60cdff] text-xs text-[#222]">1</span>
      </div>
    </div>
  );
}

/* ---------- window ---------- */
const MENU = [["", "F", "ile", "w-[40px]"], ["", "M", "isc.", "w-[52px]"], ["", "V", "iew", "w-[49px]"], ["", "G", "eometry", "w-[83px]"], ["F", "E", "M", "w-[46px]"], ["", "A", "pplication", "w-[93px]"], ["", "S", "ettings", "w-[70px]"], ["", "H", "elp", "w-[40px]"]];

export default function App() {
  return (
    <div className="relative flex h-[899px] w-[1599px] flex-col overflow-hidden bg-[#f0f0f0]">
      <div className="flex h-[29px] shrink-0 items-center bg-[#e9f4f8] pl-[2px] font-['Open_Sans',sans-serif]">
        <Lsp s={20} />
        <span className="ml-1 text-[14.500px] tracking-[-0.120px] whitespace-nowrap text-[#1c1c1c]">LS-PrePost(R) V4.11(Beta)-27Feb2023 - E:\mini project\LSTC.H3_50TH_FAST.120702_V2.0_13.k</span>
        <X size={19} strokeWidth={1.400} className="mr-[21px] ml-auto" color="#111" />
      </div>
      <div className="flex h-[23px] shrink-0 items-center bg-white pt-[2px] pl-[9px] font-['Noto_Sans',sans-serif] text-[14.500px] leading-none tracking-[-0.150px] text-[#242424]">
        {MENU.map(([a, u, b, w]) => (
          <span key={b} className={w}>{a}<span className="underline underline-offset-2">{u}</span>{b}</span>
        ))}
      </div>
      <div className="flex h-[691px] shrink-0">
        <div className="relative mt-[4px] ml-[2px] w-[1514px] overflow-hidden border-2 border-[#6c6e72] bg-white">
          <Dummy />
          <Triad />
          <div className="flex h-[27px] items-end pl-[24px] font-['Liberation_Sans',Arial,sans-serif] text-[19.950px] leading-[18px] font-bold text-[#111]">LSTC 50th% Fast H-III Dummy (Version_2.0, Early-July 2012)</div>
          <div className="flex h-[14px] items-center">
            <svg width="36" height="14" viewBox="0 0 36 14"><path d="M1 1H13V13H1" fill="none" stroke="#b4b4c8" strokeWidth="1.500" /><rect x="3" y="3" width="8" height="8" fill="#7c7c9c" /><path d="M20 1L26 7L20 13M25 1L31 7L25 13" fill="none" stroke="#b0b0c0" strokeWidth="1.500" /></svg>
          </div>
          <Tree />
        </div>
        <div className="w-[3px]" />
        <div className="flex pt-[2px]"><SideBar /></div>
      </div>
      <Toolbar />
      <div className="flex h-[31px] shrink-0 pl-[2px] font-['Noto_Sans',sans-serif] font-bold text-[#1c1c1c]">
        <div className="mt-px w-[729px] border-b-2 border-[#b4b4b4] bg-white pl-[2px] text-[15px]">&gt;</div>
        <div className="flex w-[732px] justify-between overflow-hidden border-2 border-[#b8b8b8] bg-white">
          <div className="-mt-[5px] flex flex-col pl-[2px] text-[13.600px] leading-[16px] tracking-[0.740px]">
            <span>zoomhere -0.066151 -0.110294 1.757812;</span>
            <span>zoomhere -0.066151 -0.110294 1.406250;</span>
          </div>
          <div className="w-[22px] bg-[#ececec]" />
        </div>
      </div>
      <div className="flex h-[25px] shrink-0 items-center pl-[3px] font-['Open_Sans',sans-serif] text-[13.500px] leading-none font-bold tracking-[-0.400px] text-[#1c1c1c]">
        <span className="w-[1410px] pt-[6px] tracking-[-0.380px]">Clear selected items in list</span>
        <span className="flex h-full items-center border-l border-[#d4d4d4] pt-[6px] pl-[5px]">Fast Renderer</span>
      </div>
      <Measure />
      <Taskbar />
    </div>
  );
}
